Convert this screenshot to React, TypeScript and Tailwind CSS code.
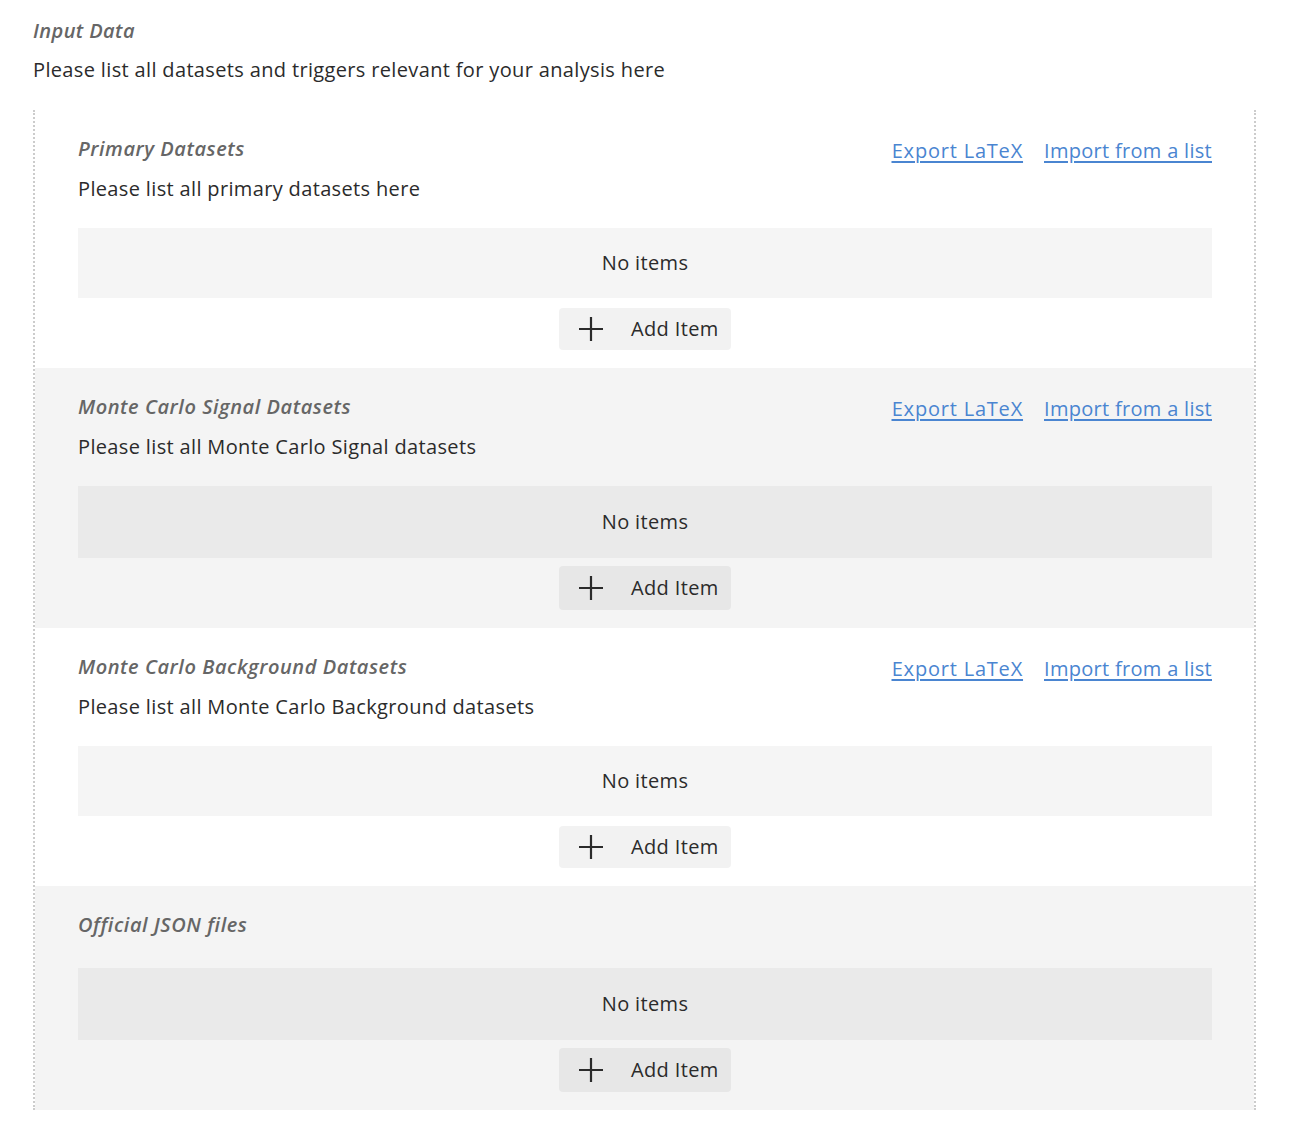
interface Section {
  title: string
  description?: string
  links: boolean
}

const sections: Section[] = [
  { title: 'Primary Datasets', description: 'Please list all primary datasets here', links: true },
  { title: 'Monte Carlo Signal Datasets', description: 'Please list all Monte Carlo Signal datasets', links: true },
  { title: 'Monte Carlo Background Datasets', description: 'Please list all Monte Carlo Background datasets', links: true },
  { title: 'Official JSON files', links: false },
]

function PlusIcon() {
  return (
    <svg width="26" height="26" viewBox="0 0 26 26" className="shrink-0">
      <path d="M13 1v24M1 13h24" stroke="#2b2b2b" strokeWidth="2.2" fill="none" />
    </svg>
  )
}

function ListSection({ section, shaded }: { section: Section; shaded: boolean }) {
  return (
    <div className={shaded ? 'bg-[#f4f4f4] pl-[43px] pr-[42px] pt-[26px] pb-[18px]' : 'bg-white pl-[43px] pr-[42px] pt-[26px] pb-[18px]'}>
      <div className="flex items-start justify-between">
        <div>
          <div className="text-[20px] leading-[26px] italic font-semibold text-[#666] tracking-[0.55px]">{section.title}</div>
          {section.description && (
            <div className="mt-[14px] text-[20px] leading-[26px] text-[#2b2b2b] tracking-[0.35px]">{section.description}</div>
          )}
        </div>
        {section.links && (
          <div className="flex gap-[21px] pt-[2px] text-[20px] leading-[26px] tracking-[0.3px] text-[#4a85d1] underline underline-offset-[3px]">
            <a href="#" className="tracking-[0.8px]">Export LaTeX</a>
            <a href="#">Import from a list</a>
          </div>
        )}
      </div>
      <div
        className={
          (section.description ? 'mt-[26px] ' : 'mt-[30px] ') +
          (shaded ? 'h-[72px] ' : 'h-[70px] ') +
          'flex items-center justify-center bg-black/[0.04] text-[20px] tracking-[0.35px] text-[#2b2b2b]'
        }
      >
        No items
      </div>
      <div className={shaded ? 'mt-[8px] flex justify-center' : 'mt-[10px] flex justify-center'}>
        <button
          className={
            (shaded ? 'h-[44px] ' : 'h-[42px] ') +
            'flex w-[172px] items-center gap-[27px] rounded-[4px] bg-black/[0.05] pl-[19px] text-[20px] tracking-[0.35px] text-[#2b2b2b]'
          }
        >
          <PlusIcon />
          Add Item
        </button>
      </div>
    </div>
  )
}

export default function App() {
  return (
    <div className="min-h-screen bg-white px-[33px] pt-[17px] pb-[36px] font-['Open_Sans',sans-serif]">
      <div className="text-[20px] leading-[28px] italic font-semibold text-[#666] tracking-[0.4px]">Input Data</div>
      <div className="mt-[11px] text-[20px] leading-[28px] text-[#2b2b2b] tracking-[0.35px]">
        Please list all datasets and triggers relevant for your analysis here
      </div>
      <div className="mt-[26px] w-[1223px] border-x-2 border-dotted border-[#ccc]">
        {sections.map((s, i) => (
          <ListSection key={s.title} section={s} shaded={i % 2 === 1} />
        ))}
      </div>
    </div>
  )
}
